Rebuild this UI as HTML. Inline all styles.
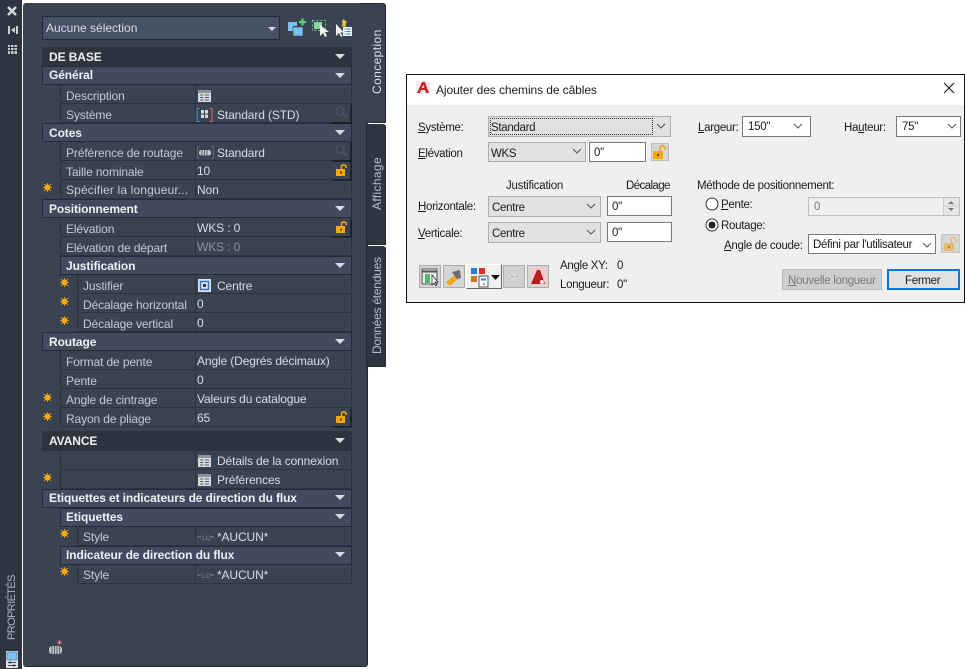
<!DOCTYPE html>
<html><head><meta charset="utf-8">
<style>
html,body{margin:0;padding:0;background:#fff;width:965px;height:669px;overflow:hidden}
body{position:relative;font-family:"Liberation Sans",sans-serif;font-size:12px}
div,span,svg{position:absolute;box-sizing:border-box}
u{text-decoration:underline}
.t{white-space:nowrap;line-height:16px;height:16px;color:#d8dde4;letter-spacing:-.12px}
.l{color:#c3c9d3}
.b{font-weight:bold;color:#edf0f4;letter-spacing:-.1px}
.g{color:#8a919c}
.h{left:42px;width:310px;height:19px;background:#424b5e;border:1px solid #262c36}
.d{left:42px;width:310px;height:20px;background:#2d333f}
.r{height:19px;border-bottom:1px solid #2d3440;border-right:1px solid #2d3440;border-left:1px solid #2d3440}
.v{left:194px;top:0;width:1px;height:19px;background:#2d3440}
.arr{width:0;height:0;border-left:5px solid transparent;border-right:5px solid transparent;border-top:5px solid #d9dde3;left:335px}
.dt{color:#1b1b1b;white-space:nowrap;line-height:16px;height:16px;font-size:11.5px;letter-spacing:-.3px;margin-top:1px}
.c{background:#e1e1e1;border:1px solid #adadad}
.i{background:#fff;border:1px solid #7a7a7a}
.tb{background:#d6d6d6;border:1px solid #adadad}
</style></head><body>

<!-- left strip -->
<div style="left:0;top:0;width:22px;height:669px;background:#2e3541"></div>
<svg style="left:6px;top:5px" width="14" height="50" viewBox="0 0 14 50">
<path d="M2 2l8 8M10 2l-8 8" stroke="#d5d9df" stroke-width="2.4" fill="none"/>
<path d="M2 21h2v8H2zM10 21h2v8h-2zM5 25l4-3v6z" fill="#c9ced6"/>
<path d="M2 40h9v9H2z" fill="#c9ced6"/><path d="M2 42.500h9M2 45.500h9M4.500 39v10M8 39v10" stroke="#2e3541" stroke-width="1" fill="none"/>
</svg>
<div class="t" style="left:4px;top:640px;color:#aeb4be;transform-origin:0 0;transform:rotate(-90deg);width:66px;font-size:11px;letter-spacing:-.6px">PROPRIÉTÉS</div>
<svg style="left:6px;top:651px" width="12" height="17" viewBox="0 0 12 17"><rect width="12" height="17" fill="#dfe3e8"/><rect x="1" y="1" width="10" height="8" fill="#7cc1f2" stroke="#4f6272" stroke-width=".6"/><path d="M2 11.500h8M2 14.500h8M4 10v3M8 13v3" stroke="#3c4654" fill="none"/></svg>

<!-- panel -->
<div style="left:23px;top:3px;width:345px;height:664px;background:#3a4352;border-radius:3px;border-bottom:1px solid #232932;border-right:1px solid #232932"></div>
<div style="left:366px;top:3px;width:20px;height:120px;background:#3a4352;border-right:1px solid #232932;border-top-right-radius:3px;border-bottom:1px solid #232932;border-top:1px solid #232932"></div>
<div style="left:360px;top:3px;width:10px;height:120px;background:#3a4352;border-top:1px solid #232932"></div>
<div style="left:366px;top:124px;width:20px;height:121px;background:#2f3541;border-right:1px solid #232932;border-bottom:1px solid #232932;border-top-right-radius:3px"></div>
<div style="left:366px;top:246px;width:20px;height:121px;background:#2f3541;border-right:1px solid #232932;border-bottom:1px solid #232932;border-top-right-radius:3px"></div>
<div style="left:366px;top:124px;width:1px;height:245px;background:#232932"></div>
<div class="t" style="left:369px;top:94px;width:60px;transform-origin:0 0;transform:rotate(-90deg);color:#dde1e6;letter-spacing:.4px">Conception</div>
<div class="t" style="left:369px;top:210px;width:60px;transform-origin:0 0;transform:rotate(-90deg);color:#b9bfc9;letter-spacing:.35px">Affichage</div>
<div class="t" style="left:369px;top:354px;width:100px;transform-origin:0 0;transform:rotate(-90deg);color:#b9bfc9;letter-spacing:-.25px">Données étendues</div>

<!-- top select -->
<div style="left:42px;top:16px;width:238px;height:24px;background:#465164;border:1px solid #252b35;border-radius:2px"></div>
<div class="t" style="left:46px;top:20px;color:#d9dde3;letter-spacing:0">Aucune sélection</div>
<div class="arr" style="left:268px;top:27px;border-left-width:4px;border-right-width:4px;border-top-width:4px"></div>
<svg style="left:287px;top:18px" width="75" height="20" viewBox="0 0 75 20">
<path d="M1 4h9v4H6v5H1z" fill="#7cc0f2"/><rect x="6" y="9" width="10" height="9" fill="#7cc0f2" stroke="#3a4352" stroke-width=".6"/><path d="M12 4h7M15.500 .5v7" stroke="#58d17c" stroke-width="2.200" fill="none"/>
<rect x="25.500" y="2.500" width="13" height="10" fill="none" stroke="#58d17c" stroke-dasharray="2 2"/><rect x="27" y="4" width="8" height="7" fill="#8fd0a2"/><path d="M33 7v11l3-3 2 4 2-1-2-4h4z" fill="#f0f0f0"/>
<path d="M49 6v12l3-3 2 4 1.500-1-2-3.500h3.500z" fill="#f0f0f0"/><path d="M55 3l2-2 1 2 2 0-1.500 3 .5 3-2.500-1-2 1 1-3z" fill="#f2c23e"/><rect x="56" y="9" width="9" height="9" fill="#f0f4f8"/><path d="M57.500 11h1M59.500 11h4M57.500 13.500h1M59.500 13.500h4M57.500 16h1M59.500 16h4" stroke="#2f7ed0" fill="none"/>
</svg>

<!-- property rows -->
<div class="d" style="top:47px"></div><div class="t b" style="left:49px;top:49px">DE BASE</div><div class="arr" style="top:54px"></div>
<div class="h" style="top:66px"></div><div class="t b" style="left:49px;top:67px">Général</div><div class="arr" style="top:73px"></div>

<div class="r" style="left:60px;top:85px;width:292px"><div class="v" style="left:134px"></div></div><div class="t l" style="left:66px;top:88px">Description</div>
<div class="r" style="left:60px;top:104px;width:292px"><div class="v" style="left:134px"></div></div><div class="t l" style="left:66px;top:107px">Système</div><div class="t" style="left:217px;top:107px">Standard (STD)</div>

<div class="h" style="top:123px"></div><div class="t b" style="left:49px;top:125px">Cotes</div><div class="arr" style="top:130px"></div>
<div class="r" style="left:60px;top:142px;width:292px"><div class="v" style="left:134px"></div></div><div class="t l" style="left:66px;top:145px">Préférence de routage</div><div class="t" style="left:217px;top:145px">Standard</div>
<div class="r" style="left:60px;top:161px;width:292px"><div class="v" style="left:134px"></div></div><div class="t l" style="left:66px;top:164px">Taille nominale</div><div class="t" style="left:197px;top:163px">10</div>
<div class="r" style="left:60px;top:180px;width:292px"><div class="v" style="left:134px"></div></div><div class="t l" style="left:66px;top:182px;letter-spacing:.15px">Spécifier la longueur...</div><div class="t" style="left:197px;top:182px">Non</div>

<div class="h" style="top:199px"></div><div class="t b" style="left:49px;top:201px">Positionnement</div><div class="arr" style="top:206px"></div>
<div class="r" style="left:60px;top:218px;width:292px"><div class="v" style="left:134px"></div></div><div class="t l" style="left:66px;top:221px">Elévation</div><div class="t" style="left:197px;top:220px">WKS : 0</div>
<div class="r" style="left:60px;top:237px;width:292px"><div class="v" style="left:134px"></div></div><div class="t l" style="left:66px;top:240px">Elévation de départ</div><div class="t g" style="left:197px;top:239px">WKS : 0</div>

<div class="h" style="left:60px;width:292px;top:256px"></div><div class="t b" style="left:66px;top:258px">Justification</div><div class="arr" style="top:263px"></div>
<div class="r" style="left:77px;top:275px;width:275px"><div class="v" style="left:117px"></div></div><div class="t l" style="left:83px;top:278px">Justifier</div><div class="t" style="left:217px;top:278px">Centre</div>
<div class="r" style="left:77px;top:294px;width:275px"><div class="v" style="left:117px"></div></div><div class="t l" style="left:83px;top:297px">Décalage horizontal</div><div class="t" style="left:197px;top:296px">0</div>
<div class="r" style="left:77px;top:313px;width:275px"><div class="v" style="left:117px"></div></div><div class="t l" style="left:83px;top:316px">Décalage vertical</div><div class="t" style="left:197px;top:315px">0</div>

<div class="h" style="top:332px"></div><div class="t b" style="left:49px;top:334px">Routage</div><div class="arr" style="top:339px"></div>
<div class="r" style="left:60px;top:351px;width:292px"><div class="v" style="left:134px"></div></div><div class="t l" style="left:66px;top:354px">Format de pente</div><div class="t" style="left:197px;top:353px">Angle (Degrés décimaux)</div>
<div class="r" style="left:60px;top:370px;width:292px"><div class="v" style="left:134px"></div></div><div class="t l" style="left:66px;top:373px">Pente</div><div class="t" style="left:197px;top:372px">0</div>
<div class="r" style="left:60px;top:389px;width:292px"><div class="v" style="left:134px"></div></div><div class="t l" style="left:66px;top:392px">Angle de cintrage</div><div class="t" style="left:197px;top:391px">Valeurs du catalogue</div>
<div class="r" style="left:60px;top:408px;width:292px"><div class="v" style="left:134px"></div></div><div class="t l" style="left:66px;top:411px">Rayon de pliage</div><div class="t" style="left:197px;top:410px">65</div>

<div class="d" style="top:431px"></div><div class="t b" style="left:49px;top:433px;font-size:12px">AVANCE</div><div class="arr" style="top:438px"></div>
<div class="r" style="left:60px;top:451px;width:292px"><div class="v" style="left:134px"></div></div><div class="t" style="left:217px;top:453px">Détails de la connexion</div>
<div class="r" style="left:60px;top:470px;width:292px"><div class="v" style="left:134px"></div></div><div class="t" style="left:217px;top:472px">Préférences</div>
<div class="h" style="top:489px"></div><div class="t b" style="left:49px;top:490px;letter-spacing:-.12px">Etiquettes et indicateurs de direction du flux</div><div class="arr" style="top:495px"></div>
<div class="h" style="left:60px;width:292px;top:508px"></div><div class="t b" style="left:66px;top:509px">Etiquettes</div><div class="arr" style="top:514px"></div>
<div class="r" style="left:77px;top:527px;width:275px"><div class="v" style="left:117px"></div></div><div class="t l" style="left:83px;top:529px">Style</div><div class="t" style="left:217px;top:529px">*AUCUN*</div>
<div class="h" style="left:60px;width:292px;top:546px"></div><div class="t b" style="left:66px;top:547px">Indicateur de direction du flux</div><div class="arr" style="top:552px"></div>
<div class="r" style="left:77px;top:565px;width:275px"><div class="v" style="left:117px"></div></div><div class="t l" style="left:83px;top:567px">Style</div><div class="t" style="left:217px;top:567px">*AUCUN*</div>

<!-- icons over rows -->
<svg style="left:0;top:0" width="368" height="669" viewBox="0 0 368 669">
<defs>
<g id="star"><circle r="3" fill="#f7a70f"/><path d="M-4.500 0H4.500M0 -4.500V4.500M-3.400 -3.400L3.400 3.400M-3.400 3.400L3.400 -3.400" stroke="#f7a70f" stroke-width=".8"/></g>
<g id="tbl"><rect width="13" height="12" fill="#d7d9dc"/><rect width="13" height="3" fill="#8f949b"/><path d="M2 5h3.500M7 5h4M2 7.500h3.500M7 7.500h4M2 10h3.500M7 10h4" stroke="#5a606a" fill="none"/></g>
<g id="lock"><rect x="0" y="5" width="9" height="7" fill="#f8a80c"/><rect x="4" y="7.500" width="2" height="2" fill="#5d4308"/><path d="M5.500 5V2.500C5.500 .5 10 .5 10 2.500V4" stroke="#f8a80c" stroke-width="1.500" fill="none"/></g>
<g id="mag"><circle cx="5" cy="5" r="4" fill="none" stroke="#4f5662" stroke-width="1.200"/><path d="M8 8l4 4" stroke="#4f5662" stroke-width="2"/></g>
<g id="btn"><path d="M0 18.500H18.500V0" stroke="#0c0f13" fill="none"/></g>
<g id="lc"><path d="M0 3h4" stroke="#7e8590"/><text x="5" y="6" font-size="6.500" fill="#858c97" font-family="Liberation Sans">LC</text><path d="M13 3h4" stroke="#7e8590"/></g>
</defs>
<use href="#tbl" x="198" y="90"/>
<use href="#tbl" x="198" y="455"/>
<use href="#tbl" x="198" y="474"/>
<use href="#star" x="47.500" y="187.500"/>
<use href="#star" x="64.500" y="282.500"/>
<use href="#star" x="64.500" y="301.500"/>
<use href="#star" x="64.500" y="320.500"/>
<use href="#star" x="47.500" y="397.500"/>
<use href="#star" x="47.500" y="416.500"/>
<use href="#star" x="47.500" y="477.500"/>
<use href="#star" x="64.500" y="533.500"/>
<use href="#star" x="64.500" y="571.500"/>
<use href="#btn" x="332.500" y="104.500"/><use href="#mag" x="335" y="106"/>
<use href="#btn" x="332.500" y="142.500"/><use href="#mag" x="335" y="144"/>
<use href="#btn" x="332.500" y="161.500"/><use href="#lock" x="336" y="164"/>
<use href="#btn" x="332.500" y="218.500"/><use href="#lock" x="336" y="221"/>
<use href="#btn" x="332.500" y="408.500"/><use href="#lock" x="336" y="411"/>
<!-- système icon -->
<path d="M199.500 108.500h-2.500v13h2.500" stroke="#3d9ae0" fill="none"/><path d="M209.500 108.500h2.500v13h-2.500" stroke="#dc6a6a" fill="none"/><rect x="201" y="110" width="7" height="8" fill="#d7d9dc"/><path d="M204.500 110v8M201 114h7" stroke="#3a4352"/>
<!-- préférence de routage icon -->
<path d="M199.500 146.500h-2v12h2M211.500 146.500h2v12h-2" stroke="#5c6470" fill="none"/>
<rect x="199" y="150" width="12" height="5.500" rx="2.500" fill="#c6c9ce"/><path d="M202 150v5.500M204.500 150v5.500M207 150v5.500" stroke="#555c68"/>
<!-- justifier -->
<rect x="198" y="279" width="13" height="13" fill="#dfe3e8"/><rect x="200.500" y="281.500" width="8" height="8" fill="none" stroke="#2a6fb8" stroke-width="1.400"/><rect x="203" y="284" width="3" height="3" fill="#2a3b55"/>
<use href="#lc" x="197" y="534"/>
<use href="#lc" x="197" y="572"/>
<!-- bottom add icon -->
<rect x="49" y="646" width="13" height="8" rx="3" fill="#bfc2c7"/><path d="M52 646v8M54.500 646v8M57 646v8M59.500 646v8" stroke="#5c626c"/>
<circle cx="59.500" cy="642.500" r="2.500" fill="#8b4a5a"/><path d="M58 642.500h3M59.500 641v3" stroke="#cfd3d8" stroke-width=".6"/>
</svg>

<!-- dialog -->
<div style="left:406px;top:74px;width:559px;height:229px;background:#efefef;border:1px solid #111"></div>
<div style="left:407px;top:75px;width:557px;height:30px;background:#fff"></div>
<svg style="left:416px;top:81px" width="14" height="13" viewBox="0 0 14 13"><rect width="14" height="13" fill="#fbeaea"/><path d="M1 12L6 1h3l4 11h-3L9 9H5l-1 3zM5.800 7h2.500L7.300 3.500z" fill="#c8252c" fill-rule="evenodd"/></svg>
<div class="dt" style="left:436px;top:81px;font-size:12px;letter-spacing:-.09px">Ajouter des chemins de câbles</div>
<svg style="left:943px;top:82px" width="12" height="12" viewBox="0 0 12 12"><path d="M1 1l10 10M11 1L1 11" stroke="#111" stroke-width="1" fill="none"/></svg>

<div class="dt" style="left:418px;top:119px"><u>S</u>ystème:</div>
<div class="dt" style="left:418px;top:145px"><u>E</u>lévation</div>
<div class="c" style="left:488px;top:116px;width:183px;height:21px"></div>
<div style="left:490px;top:118px;width:163px;height:17px;border:1px dotted #333"></div>
<div class="dt" style="left:491px;top:119px">Standard</div>
<div class="c" style="left:488px;top:142px;width:98px;height:20px"></div><div class="dt" style="left:491px;top:145px">WKS</div>
<div class="i" style="left:589px;top:142px;width:57px;height:20px"></div><div class="dt" style="left:594px;top:144px">0"</div>

<div class="dt" style="left:698px;top:119px"><u>L</u>argeur:</div>
<div class="i" style="left:742px;top:116px;width:69px;height:21px"></div><div class="dt" style="left:748px;top:118px">150"</div>
<div class="dt" style="left:844px;top:119px">Ha<u>u</u>teur:</div>
<div class="i" style="left:896px;top:116px;width:65px;height:21px"></div><div class="dt" style="left:902px;top:118px">75"</div>

<div class="dt" style="left:506px;top:177px;letter-spacing:-.23px">Justification</div>
<div class="dt" style="left:626px;top:177px;letter-spacing:-.6px">Décalage</div>
<div class="dt" style="left:697px;top:177px">Méthode de positionnement:</div>

<div class="dt" style="left:418px;top:198px"><u>H</u>orizontale:</div>
<div class="dt" style="left:418px;top:225px"><u>V</u>erticale:</div>
<div class="c" style="left:488px;top:196px;width:113px;height:21px"></div><div class="dt" style="left:492px;top:199px">Centre</div>
<div class="c" style="left:488px;top:222px;width:113px;height:21px"></div><div class="dt" style="left:492px;top:225px">Centre</div>
<div class="i" style="left:607px;top:196px;width:65px;height:20px"></div><div class="dt" style="left:612px;top:198px">0"</div>
<div class="i" style="left:607px;top:222px;width:65px;height:20px"></div><div class="dt" style="left:612px;top:224px">0"</div>

<div class="dt" style="left:560px;top:257px">Angle XY:</div><div class="dt" style="left:617px;top:257px">0</div>
<div class="dt" style="left:560px;top:276px">Longueur:</div><div class="dt" style="left:617px;top:276px">0"</div>

<div class="dt" style="left:721px;top:196px"><u>P</u>ente:</div>
<div class="dt" style="left:721px;top:217px">Routa<u>g</u>e:</div>
<div class="dt" style="left:724px;top:237px"><u>A</u>ngle de coude:</div>
<div style="left:808px;top:197px;width:152px;height:19px;background:#efefef;border:1px solid #bfbfbf"></div>
<div style="left:943px;top:198px;width:16px;height:17px;background:#e6e6e6;border-left:1px solid #ccc"></div>
<div class="dt" style="left:814px;top:198px;color:#7b7b7b">0</div>
<div class="i" style="left:808px;top:234px;width:128px;height:20px"></div><div class="dt" style="left:813px;top:236px">Défini par l'utilisateur</div>

<div style="left:782px;top:269px;width:100px;height:21px;background:#cdcdcd;border:1px solid #bdbdbd"></div>
<div class="dt" style="left:788px;top:272px;color:#7b7b7b"><u>N</u>ouvelle longueur</div>
<div style="left:887px;top:269px;width:73px;height:21px;background:#e1e1e1;border:2px solid #0078d7"></div>
<div class="dt" style="left:905px;top:272px">Fermer</div>

<div class="tb" style="left:419px;top:265px;width:22px;height:23px"></div>
<div class="tb" style="left:443px;top:265px;width:22px;height:23px"></div>
<div style="left:466px;top:264px;width:36px;height:25px;background:#f0f0f0;border:1px solid;border-color:#fff #666 #666 #fff"></div>
<div class="tb" style="left:503px;top:265px;width:22px;height:23px;background:#cfcfcf"></div>
<div class="tb" style="left:527px;top:265px;width:22px;height:23px"></div>

<svg style="left:407px;top:75px" width="557" height="227" viewBox="407 75 557 227">
<g fill="none" stroke="#555"><path d="M657 124l4 4 4-4M573 149l4 4 4-4M794 124l4 4 4-4M948 124l4 4 4-4M587 204l4 4 4-4M587 230l4 4 4-4M923 243l4 4 4-4"/></g>
<!-- locks -->
<rect x="651.500" y="143.500" width="17" height="17" fill="#d6d6d6" stroke="#bdbdbd"/>
<rect x="653" y="151" width="10" height="8" fill="#f5a611"/><rect x="657" y="154" width="2" height="2" fill="#6b4a0a"/><path d="M660 151v-3c0-3 5-3 5 0v2" stroke="#f5a611" stroke-width="1.500" fill="none"/>
<rect x="941.500" y="234.500" width="18" height="18" fill="#d6d6d6" stroke="#c6c6c6"/>
<rect x="944" y="243" width="10" height="8" fill="#e4bd72"/><rect x="948" y="246" width="2" height="2" fill="#9b8452"/><path d="M951 243v-3c0-3 5-3 5 0v2" stroke="#e4bd72" stroke-width="1.500" fill="none"/>
<!-- radios -->
<circle cx="712" cy="204" r="6" fill="#fff" stroke="#333"/>
<circle cx="712" cy="225" r="6" fill="#fff" stroke="#333"/><circle cx="712" cy="225" r="3.500" fill="#222"/>
<!-- spin -->
<path d="M948 204l3-3 3 3zM948 208l3 3 3-3z" fill="#777"/><path d="M944 206h15" stroke="#ccc"/>
<!-- toolbar icons -->
<rect x="422" y="269" width="15" height="15" fill="#e9e9e9" stroke="#555"/><path d="M422 271.500h15" stroke="#555" stroke-width="2"/><rect x="425" y="274" width="5" height="9" fill="#59b36f"/><path d="M432 275v10l2-2 2 3 1-1-2-3h3z" fill="#fff" stroke="#222" stroke-width=".7"/>
<path d="M446 282l9-7 3 4-8 7z" fill="#f2a81d"/><path d="M452 272l8-2 1 8-4 1z" fill="#6b6b6b"/>
<rect x="471" y="268" width="6" height="6" fill="#2b7fc9"/><rect x="479" y="268" width="6" height="6" fill="#e0312f"/><rect x="471" y="276" width="6" height="6" fill="#c9752f"/><rect x="479" y="276" width="9" height="11" fill="#fff" stroke="#555"/><path d="M481 279.500h5" stroke="#2b7fc9" stroke-width="2"/><path d="M483.500 283h1v2h-1z" fill="#333"/>
<path d="M491 275h9l-4.500 5z" fill="#111"/>
<path d="M509 276.500l4-3v2h7v2h-7v2zM515 273v8" stroke="#eee" fill="#bbb" stroke-width=".6"/>
<rect x="530" y="268" width="16" height="17" fill="#f3c9c9"/><path d="M531 284l6-14h3l5 14z" fill="#b81d24"/><circle cx="542" cy="282" r="2" fill="#eee"/>
</svg>
</body></html>
